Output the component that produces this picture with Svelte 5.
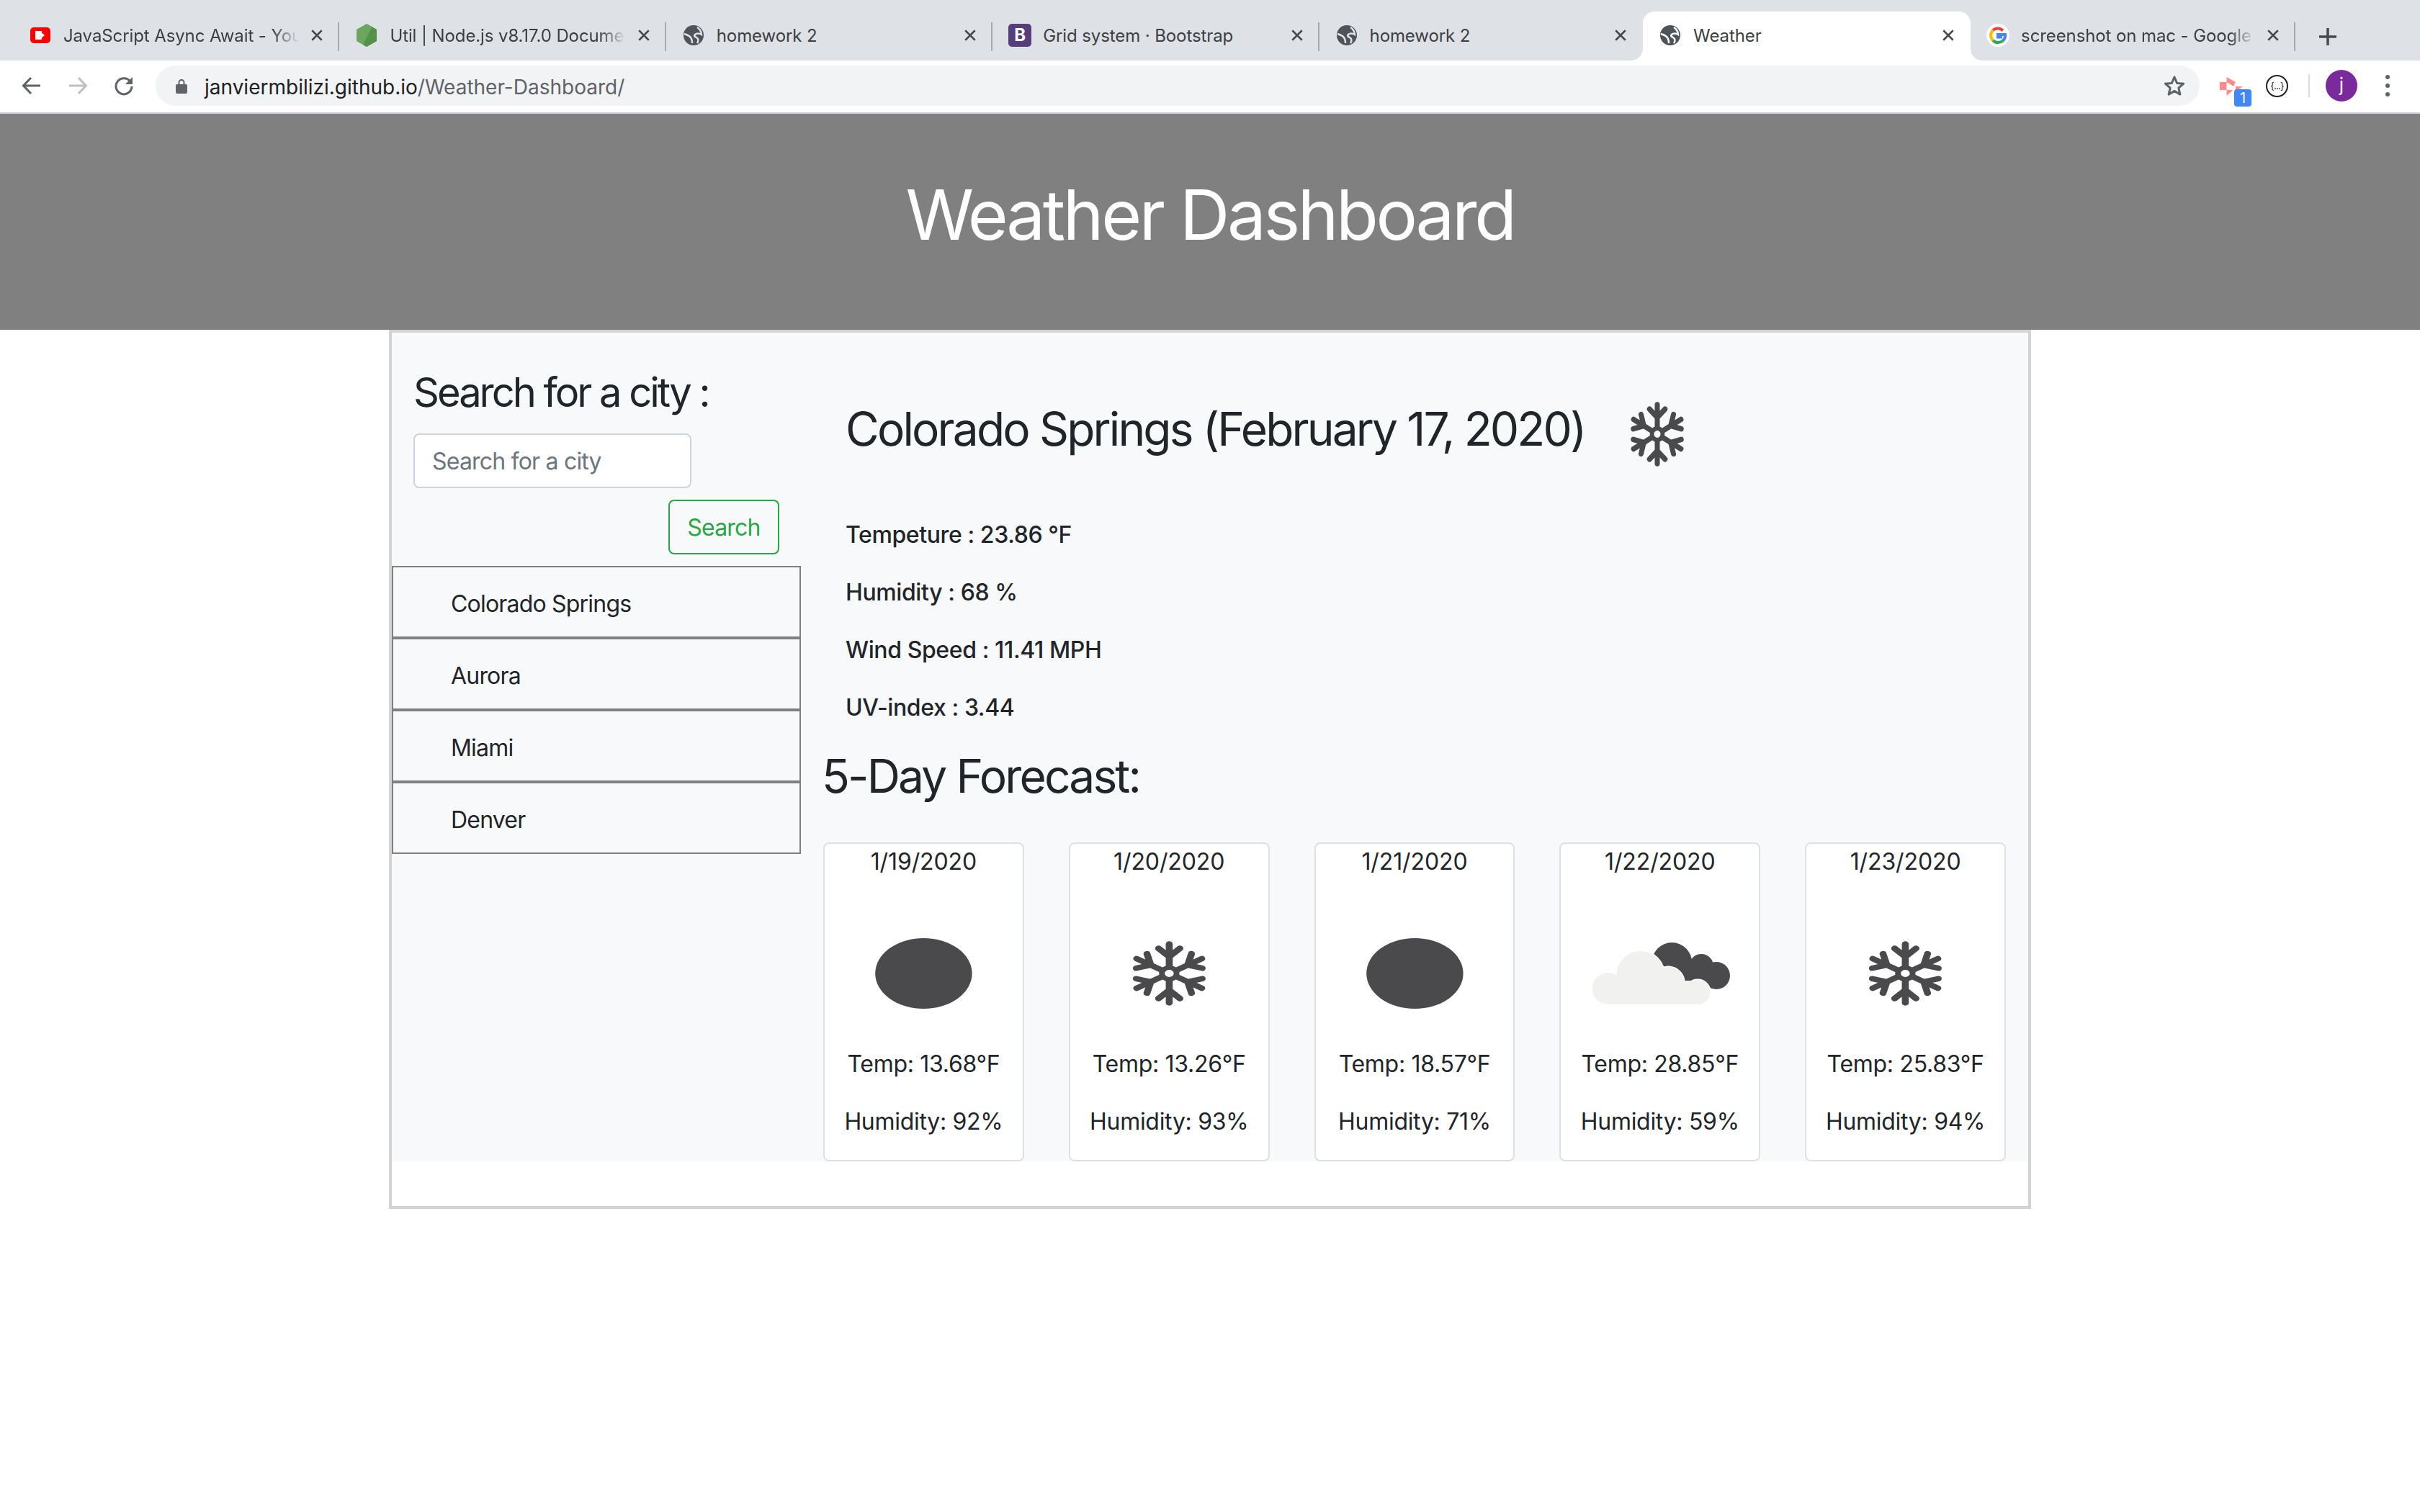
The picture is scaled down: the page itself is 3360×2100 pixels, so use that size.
<script>
  const tabs = [
    { title: 'JavaScript Async Await - YouTube', icon: 'yt', fade: true },
    { title: 'Util | Node.js v8.17.0 Documentation', icon: 'node', fade: true },
    { title: 'homework 2', icon: 'globe' },
    { title: 'Grid system · Bootstrap', icon: 'boot' },
    { title: 'homework 2', icon: 'globe', nosep: true },
    { title: 'Weather', icon: 'globe', active: true, nosep: true },
    { title: 'screenshot on mac - Google Search', icon: 'google', fade: true }
  ];
  const days = [
    { date: '1/19/2020', icon: 'dot', temp: '13.68', hum: 92 },
    { date: '1/20/2020', icon: 'snow', temp: '13.26', hum: 93 },
    { date: '1/21/2020', icon: 'dot', temp: '18.57', hum: 71 },
    { date: '1/22/2020', icon: 'cloud', temp: '28.85', hum: 59 },
    { date: '1/23/2020', icon: 'snow', temp: '25.83', hum: 94 }
  ];
  const cities = ['Colorado Springs', 'Aurora', 'Miami', 'Denver'];
  const angles = [0, 60, 120, 180, 240, 300];
</script>

{#snippet flake(sx, sy, cx, cy)}
  <g transform="translate({cx} {cy}) scale({sx} {sy})" fill="none" stroke="#4a4a4c" stroke-width="8.500" stroke-linecap="round" stroke-linejoin="round">
    <circle r="9" stroke-width="7" />
    {#each angles as a}
      <g transform="rotate({a})">
        <path d="M0 -12 V-46 M0 -26 L-13 -39 M0 -26 L13 -39" />
      </g>
    {/each}
  </g>
{/snippet}

{#snippet globe()}
  <svg class="ico" viewBox="0 0 32 32">
    <circle cx="16" cy="16" r="14" fill="#50545a" />
    <path class="gl" d="M21 5c2 1 6 5 6 10-3-2-7-2-9 0s0 3 2 4c3 2 3 5 1 8" />
    <path class="gl" d="M3 14c3 1 6 2 8 4s3 5 3 9" />
  </svg>
{/snippet}

<div class="chrome">
  <div class="strip">
    {#each tabs as t}
      <div class="tab" class:active={t.active}>
        {#if t.icon === 'yt'}
          <svg class="ico" viewBox="0 0 32 32">
            <rect x="2" y="5" width="28" height="22" rx="5" fill="#ff0000" />
            <rect x="9" y="10" width="9" height="12" fill="#fff" />
            <path d="M15 10l7 6-7 6z" fill="#fff" />
          </svg>
        {:else if t.icon === 'node'}
          <svg class="ico" viewBox="0 0 32 32">
            <path d="M16 0l14 8v16l-14 8-14-8V8z" fill="#6da55f" />
            <path d="M16 0l14 8v16l-14 8-5-3 12-24z" fill="#4b8a3f" opacity=".7" />
          </svg>
        {:else if t.icon === 'boot'}
          <div class="ico boot">B</div>
        {:else if t.icon === 'google'}
          <svg class="ico" viewBox="0 0 32 32">
            <circle cx="16" cy="16" r="16" fill="#fff" />
            <path d="M23 9.500A10 10 0 0 0 9 9" fill="none" stroke="#ea4335" stroke-width="4" />
            <path d="M9 9a10 10 0 0 0 0 14" fill="none" stroke="#fbbc05" stroke-width="4" />
            <path d="M9 23a10 10 0 0 0 14 .5" fill="none" stroke="#34a853" stroke-width="4" />
            <path d="M23 23.500A10 10 0 0 0 26 15H16v3.500h6" fill="none" stroke="#4285f4" stroke-width="4" />
          </svg>
        {:else}
          {@render globe()}
        {/if}
        <div class="tab-title" class:fade={t.fade}>{t.title}</div>
        <svg class="close" viewBox="0 0 16 16"><path d="M2 2l12 12M14 2L2 14" stroke="#45484c" stroke-width="2.200" /></svg>
        {#if !t.nosep && !t.active}<div class="sep"></div>{/if}
      </div>
    {/each}
    <svg class="plus" viewBox="0 0 26 26"><path d="M13 1v24M1 13h24" stroke="#45484c" stroke-width="3.500" /></svg>
  </div>

  <div class="toolbar">
    <svg class="nav" viewBox="0 0 28 28"><path d="M26 14H3M13 3L2.500 14 13 25" fill="none" stroke="#5f6368" stroke-width="3" /></svg>
    <svg class="nav fwd" viewBox="0 0 28 28"><path d="M2 14h23M15 3l10.500 11L15 25" fill="none" stroke="#bcbfc3" stroke-width="3" /></svg>
    <svg class="nav rel" viewBox="0 0 28 28"><path d="M23 8.500A11 11 0 1 0 25 15" fill="none" stroke="#5f6368" stroke-width="3" /><path d="M26 2v10H16z" fill="#5f6368" /></svg>
    <div class="omni">
      <svg class="lock" viewBox="0 0 16 22"><path d="M4.500 10V6.500a3.500 3.500 0 0 1 7 0V10" fill="none" stroke="#5f6368" stroke-width="2" /><rect y="9" width="16" height="13" rx="2" fill="#5f6368" /></svg>
      <div class="url"><span class="host">janviermbilizi.github.io</span>/Weather-Dashboard/</div>
      <svg class="star" viewBox="0 0 30 30"><path d="M15 3l3.600 8.400 9.100.8-6.900 6 2.100 8.900L15 22.400l-7.900 4.700 2.100-8.900-6.900-6 9.100-.8z" fill="none" stroke="#5f6368" stroke-width="3" stroke-linejoin="round" /></svg>
    </div>
    <div class="ext">
      <svg viewBox="0 0 32 26" class="ext-ico"><path d="M9.500 0L22 7l-3 6-9.500-6zM9.500 18h9l-9 8zM22 13h10l-10 7zM0 7h9.500v11H0z" fill="#ff8b8b" /></svg>
      <div class="badge">1</div>
    </div>
    <div class="ext2"><span>&#123;...&#125;</span></div>
    <div class="tool-sep"></div>
    <div class="avatar">j</div>
    <div class="dots"><i></i><i></i><i></i></div>
  </div>
</div>

<header class="hero"><h1>Weather Dashboard</h1></header>

<div class="frame">
  <div class="panel">
    <aside class="side">
      <div class="search">
        <h3>Search for a city :</h3>
        <input type="text" placeholder="Search for a city" />
        <div class="btn-row"><button>Search</button></div>
      </div>
      <ul>
        {#each cities as c}<li>{c}</li>{/each}
      </ul>
    </aside>
    <main>
      <div class="today">
        <div class="title-row">
          <h2>Colorado Springs (February 17, 2020)</h2>
          <svg class="big" viewBox="0 0 100 100" preserveAspectRatio="none">{@render flake(0.826, 0.89, 50, 50)}</svg>
        </div>
        <p>Tempeture : 23.86 °F</p>
        <p>Humidity : 68 %</p>
        <p>Wind Speed : 11.41 MPH</p>
        <p>UV-index : 3.44</p>
      </div>
      <h2 class="fc">5-Day Forecast:</h2>
      <div class="cards">
        {#each days as d}
          <div class="card">
            <div class="date">{d.date}</div>
            <svg class="pic" viewBox="0 0 276 200" preserveAspectRatio="none">
              {#if d.icon === 'dot'}
                <ellipse cx="138" cy="100" rx="67.500" ry="49" fill="#4a4a4c" />
              {:else if d.icon === 'snow'}
                {@render flake(1.14, 0.89, 138, 100)}
              {:else}
                <g fill="#4a4a4c">
                  <circle cx="155" cy="85" r="28" /><circle cx="196" cy="90" r="17" /><circle cx="217" cy="103" r="19" />
                  <rect x="160" y="85" width="57" height="30" />
                </g>
                <g fill="#fff" stroke="#fff" stroke-width="3">
                  <circle cx="111" cy="102" r="33" /><circle cx="150" cy="113" r="22" /><circle cx="191" cy="126" r="17" />
                  <rect x="150" y="113" width="41" height="30" />
                </g>
                <g fill="#f1f1f0">
                  <circle cx="66" cy="121" r="22" /><circle cx="111" cy="102" r="33" /><circle cx="150" cy="113" r="22" /><circle cx="191" cy="126" r="17" />
                  <rect x="66" y="110" width="125" height="33" />
                </g>
              {/if}
            </svg>
            <p>Temp: {d.temp}°F</p>
            <p>Humidity: {d.hum}%</p>
          </div>
        {/each}
      </div>
    </main>
  </div>
</div>

<style>
  :global(body) { margin: 0; background: #fff; color: #212529; font-family: Inter, "Liberation Sans", sans-serif; }
  * { box-sizing: border-box; }

  .strip { height: 84px; background: #dee1e6; display: flex; align-items: flex-end; padding-left: 18px; }
  .tab { position: relative; flex: none; width: 453.400px; height: 68px; display: flex; align-items: center; padding: 0 20px 0 22px; color: #3c4043; font-size: 24px; letter-spacing: -0.1px; }
  .tab:nth-child(5) { width: 449.500px; }
  .tab:nth-child(6) { width: 455px; }
  .tab:nth-child(7) { width: 451px; }
  .tab > * { flex: none; position: relative; top: -1px; }
  .tab.active { background: #fff; border-radius: 16px 16px 0 0; }
  .tab.active::before, .tab.active::after { content: ""; position: absolute; bottom: 0; width: 16px; height: 16px; background: radial-gradient(circle at 0 0, #dee1e6 15.500px, #fff 16px); }
  .tab.active::before { right: 100%; }
  .tab.active::after { left: 100%; background: radial-gradient(circle at 100% 0, #dee1e6 15.500px, #fff 16px); }
  .ico { width: 32px; height: 32px; display: block; }
  .gl { fill: none; stroke: #dee1e6; stroke-width: 2.500px; }
  .active .gl { stroke: #fff; }
  .boot { background: #563d7c; border-radius: 5px; color: #fff; font-weight: 700; font-size: 24px; line-height: 32px; text-align: center; letter-spacing: 0; }
  .tab > .tab-title { flex: 1; min-width: 0; margin-left: 16px; white-space: nowrap; overflow: hidden; }
  .fade { -webkit-mask-image: linear-gradient(to right, #000 calc(100% - 36px), transparent); mask-image: linear-gradient(to right, #000 calc(100% - 36px), transparent); }
  .close { width: 18px; height: 18px; margin-left: 16px; margin-right: 2px; }
  .sep { position: absolute !important; right: 0; top: 15px !important; width: 2px; height: 40px; background: #a6a9ad; }
  .plus { width: 26px; height: 26px; margin: 0 0 20px 32px; }

  .toolbar { height: 74px; background: #fff; border-bottom: 2px solid #cfd1d5; display: flex; align-items: center; padding-left: 30px; padding-bottom: 2px; }
  .nav { width: 28px; height: 28px; display: block; }
  .fwd { margin-left: 36px; }
  .rel { margin-left: 36px; }
  .omni { width: 2838px; height: 56px; margin-left: 30px; background: #f1f3f4; border-radius: 28px; display: flex; align-items: center; padding: 0 20px 0 28px; }
  .lock { width: 16px; height: 22px; }
  .url { margin-left: 24px; font-size: 28px; color: #5f6368; flex: 1; padding-top: 3px; }
  .host { color: #202124; }
  .star { width: 30px; height: 30px; }
  .ext { position: relative; width: 48px; height: 48px; margin-left: 26px; align-self: flex-end; margin-bottom: 6px; }
  .ext-ico { width: 32px; height: 26px; display: block; position: absolute; left: 2px; top: 7px; }
  .badge { position: absolute; left: 22px; bottom: 0; width: 24px; height: 24px; border-radius: 4px; background: #4285f4; color: #fff; font-size: 20px; line-height: 25px; text-align: center; }
  .ext2 { width: 31px; height: 31px; margin-left: 18px; border: 2px solid #202124; border-radius: 50%; display: flex; align-items: center; justify-content: center; font-size: 13px; letter-spacing: -0.8px; color: #202124; }
  .tool-sep { width: 2px; height: 32px; background: #dadce0; margin-left: 28px; }
  .avatar { width: 44px; height: 44px; margin-left: 22px; border-radius: 50%; background: #7b2a9c; color: #fff; text-align: center; font-size: 26px; line-height: 42px; }
  .dots { display: flex; flex-direction: column; gap: 6px; margin-left: 39px; }
  .dots i { width: 6px; height: 6px; border-radius: 50%; background: #5f6368; }

  .hero { height: 300px; background: #808080; color: #fff; display: flex; justify-content: center; padding-top: 83px; }
  h1 { margin: 0; font-size: 96px; font-weight: 400; line-height: 1.2; letter-spacing: -3.4px; }

  .frame { width: 2280px; height: 1221px; margin: 0 auto; border: 4px solid #d3d3d3; }
  .panel { height: 1151px; background: #f8f9fa; display: flex; }
  .side { width: 568px; flex: none; padding-top: 50px; }
  .search { padding: 0 30px; }
  h3 { margin: 0; font-size: 56px; font-weight: 400; line-height: 1.2; letter-spacing: -3px; }
  input { display: block; width: 386px; height: 76px; margin-top: 23px; padding: 0 24px; border: 2px solid #ced4da; border-radius: 8px; background: #fff; font: inherit; font-size: 32px; letter-spacing: -0.8px; }
  input::placeholder { color: #6c757d; opacity: 1; }
  .btn-row { display: flex; justify-content: flex-end; margin-top: 16px; }
  button { width: 154px; height: 76px; border: 2px solid #28a745; border-radius: 8px; background: transparent; color: #28a745; font: inherit; font-size: 32px; letter-spacing: -0.8px; padding: 0; }
  ul { list-style: none; margin: 16px 0 0; padding: 0; }
  li { height: 100px; border: 2px solid #808080; padding-left: 80px; font-size: 32px; line-height: 102px; letter-spacing: -0.8px; }

  main { flex: 1; min-width: 0; padding: 0 31px; }
  .today { padding: 94px 0 0 31px; }
  .title-row { display: flex; align-items: flex-start; height: 163px; }
  h2 { margin: 0; font-size: 64px; font-weight: 400; line-height: 1.2; letter-spacing: -2.85px; white-space: nowrap; }
  .title-row h2 { padding-top: 2px; }
  .big { width: 100px; height: 100px; margin-left: 50px; margin-top: -3px; flex: none; }
  .today p { margin: 0 0 32px; font-size: 32px; line-height: 48px; font-weight: 500; letter-spacing: -0.4px; }
  .today p:last-child { margin-bottom: 31px; }
  .fc { margin-left: -2px; padding-top: 2px; }
  .cards { display: flex; gap: 62px; margin-top: 53px; }
  .card { flex: 1; height: 443px; background: #fff; border: 2px solid #dfe0e1; border-radius: 8px; text-align: center; }
  .date { font-size: 32px; line-height: 48px; letter-spacing: -0.1px; padding-top: 1px; height: 50px; }
  .pic { display: block; width: 100%; height: 200px; margin-top: 30px; }
  .card p { margin: 0 0 30px; padding-top: 2px; font-size: 32px; line-height: 48px; letter-spacing: -0.3px; }
</style>
